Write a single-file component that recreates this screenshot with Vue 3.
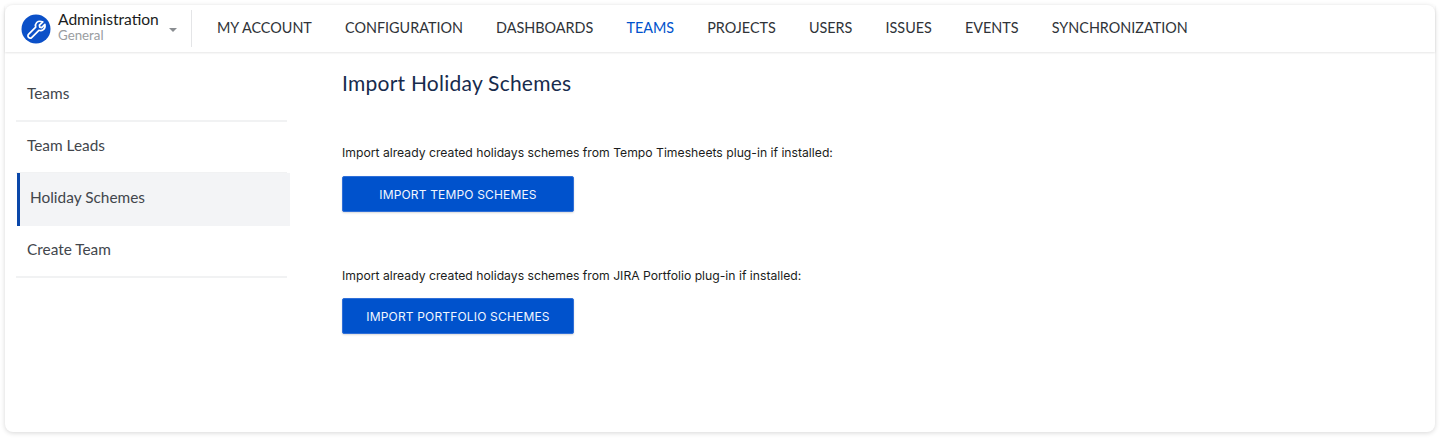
<script setup>
const navItems = ['MY ACCOUNT','CONFIGURATION','DASHBOARDS','TEAMS','PROJECTS','USERS','ISSUES','EVENTS','SYNCHRONIZATION']
const sideItems = ['Teams','Team Leads','Holiday Schemes','Create Team']
</script>

<template>
  <div class="page">
    <div class="card">
      <header class="topbar">
        <div class="brand">
          <span class="logo">
            <svg width="30" height="30" viewBox="0 0 30 30">
              <circle cx="15" cy="15" r="14.5" fill="#0b50c8"/>
              <path d="M21.8 7.900l-3.400 3.300.3 2 2 .4 3.200-3.300c.5 2.400-.2 4.200-1.600 5.300-1.300 1-3 1.200-4.400.7l-7 7c-1 1-2.400 1-3.300.1-.9-.9-.9-2.300.1-3.300l7-7c-.5-1.500-.2-3.300 1-4.600 1.400-1.300 3.700-1.600 6.100-.5z" fill="none" stroke="#fff" stroke-width="1.700" stroke-linejoin="round"/>
            </svg>
          </span>
          <span class="titles">
            <span class="title">Administration</span>
            <span class="subtitle">General</span>
          </span>
          <span class="caret"></span>
        </div>
        <nav class="nav">
          <a v-for="item in navItems" :key="item" class="nav-item" :class="{ active: item === 'TEAMS' }">{{ item }}</a>
        </nav>
      </header>
      <div class="body">
        <aside class="side">
          <div v-for="item in sideItems" :key="item" class="side-item" :class="{ selected: item === 'Holiday Schemes' }">{{ item }}</div>
        </aside>
        <main class="main">
          <h1 class="heading">Import Holiday Schemes</h1>
          <section class="block first">
            <p class="text">Import already created holidays schemes from Tempo Timesheets plug-in if installed:</p>
            <button class="btn">IMPORT TEMPO SCHEMES</button>
          </section>
          <section class="block second">
            <p class="text tight">Import already created holidays schemes from JIRA Portfolio plug-in if installed:</p>
            <button class="btn">IMPORT PORTFOLIO SCHEMES</button>
          </section>
        </main>
      </div>
    </div>
  </div>
</template>

<style>
html, body { margin: 0; background: #fff; }
</style>

<style scoped>
.page { width: 1440px; height: 440px; padding: 5px 5px 8px; box-sizing: border-box; background: #fff; overflow: hidden; }
.card { height: 427px; background: #fff; border-radius: 8px; box-shadow: 0 1px 5px rgba(0,0,0,.16); display: flex; flex-direction: column; }
.topbar { height: 47px; flex: none; display: flex; align-items: flex-start; box-sizing: border-box; padding-top: 5px; box-shadow: 0 1px 2px rgba(0,0,0,.1); font-family: Lato, sans-serif; }
.brand { width: 187px; height: 37px; box-sizing: border-box; padding-left: 16px; display: flex; align-items: center; border-right: 1px solid #e4e5e7; flex: none; }
.logo { width: 30px; height: 30px; display: block; margin-right: 7px; }
.titles { display: flex; flex-direction: column; margin-top: -4px; }
.title { font-size: 15.600px; line-height: 16px; color: #1a1c20; }
.subtitle { font-size: 13.300px; line-height: 16px; color: #9a9da1; }
.caret { margin: 3px 0 0 10px; width: 0; height: 0; border: 4px solid transparent; border-top-color: #8a8d91; border-bottom: 0; }
.nav { display: flex; gap: 33.100px; padding-left: 25px; font-size: 14.400px; line-height: 35px; color: #2f3338; }
.nav-item { white-space: nowrap; }
.nav-item.active { color: #0052cc; }
.body { flex: 1; display: flex; min-height: 0; }
.side { width: 285px; padding: 18px 0 0 11px; box-sizing: border-box; flex: none; font-family: Lato, sans-serif; }
.side-item { width: 271px; height: 52px; box-sizing: border-box; padding-left: 11px; line-height: 46px; font-size: 15.400px; color: #42464c; border-bottom: 2px solid #f1f2f3; }
.side-item.selected { width: 273px; margin-left: 1px; padding-left: 10px; background: #f3f4f6; border-left: 3px solid #0a47a9; border-bottom: 0; height: 53px; margin-top: -1px; line-height: 48px; }
.main { flex: 1; padding-left: 52px; font-family: Inter, sans-serif; }
.heading { margin: 18px 0 0; font: 400 21px/26px Lato, sans-serif; color: #172b4d; letter-spacing: .24px; }
.block { display: flex; flex-direction: column; align-items: flex-start; }
.first { margin-top: 49px; }
.second { margin-top: 56px; }
.text { margin: 0 0 15px; font-size: 12.200px; line-height: 16px; color: #1b1d20; }
.text.tight { margin-bottom: 14px; }
.btn { width: 232px; height: 36px; border: 1px solid #2f6fd8; border-radius: 2px; background: #0052cc; color: #f2f6ff; font: 400 12px Inter, sans-serif; letter-spacing: .17px; padding: 0; box-shadow: 0 1px 2px rgba(0,0,0,.15); }
</style>
